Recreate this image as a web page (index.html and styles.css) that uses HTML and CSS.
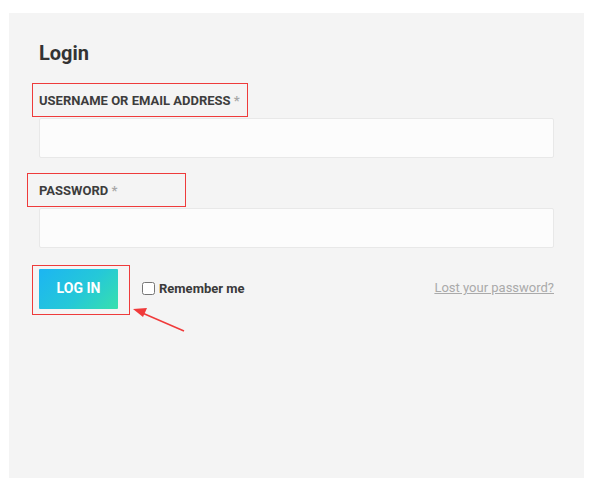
FILE: index.html
```html
<!DOCTYPE html>
<html>
<head>
<meta charset="utf-8">
<link rel="stylesheet" href="styles.css">
</head>
<body>
<div class="panel">
  <h2 class="title">Login</h2>
  <label class="field-label" for="user">Username or email address <span class="req">*</span></label>
  <input class="field-input" id="user" type="text">
  <label class="field-label pass-label" for="pass">Password <span class="req">*</span></label>
  <input class="field-input" id="pass" type="password">
  <div class="actions">
    <button class="login-btn" type="button">LOG IN</button>
    <label class="remember"><input type="checkbox" class="remember-box"><span>Remember me</span></label>
    <a class="lost" href="#">Lost your password?</a>
  </div>
</div>
<div class="mark mark-user"></div>
<div class="mark mark-pass"></div>
<div class="mark mark-btn"></div>
<svg class="arrow" width="70" height="40" viewBox="0 0 70 40">
  <line x1="64" y1="36" x2="20" y2="17" stroke="#f03a3a" stroke-width="1.5"/>
  <polygon points="13,14 27,13 23,22" fill="#f03a3a"/>
</svg>
</body>
</html>
```
FILE: styles.css
```css
html, body {
  margin: 0;
  padding: 0;
  background: #ffffff;
}
body {
  position: relative;
  width: 595px;
  height: 492px;
  font-family: Roboto, "Liberation Sans", sans-serif;
  color: #3a3a3a;
  overflow: hidden;
}
.panel {
  margin: 13px 11px 0 9px;
  height: 465px;
  box-sizing: border-box;
  background: #f4f4f4;
  padding: 28px 30px 0 30px;
}
.title {
  margin: 0;
  font-size: 20px;
  line-height: 24px;
  font-weight: 700;
  color: #333333;
}
.field-label {
  display: block;
  margin-top: 26px;
  font-size: 13px;
  line-height: 20px;
  font-weight: 700;
  text-transform: uppercase;
  color: #3d3d3d;
}
.pass-label {
  margin-top: 23px;
}
.req {
  color: #a8a8a8;
}
.field-input {
  display: block;
  box-sizing: border-box;
  width: 100%;
  height: 40px;
  margin: 7px 0 0 0;
  padding: 0 10px;
  border: 1px solid #e8e8e8;
  border-radius: 2px;
  background: #fcfcfc;
  outline: none;
}
.actions {
  display: flex;
  align-items: center;
  margin-top: 21px;
}
.login-btn {
  width: 79px;
  height: 40px;
  border: none;
  border-radius: 1px;
  background: linear-gradient(135deg, #1cb5f2 0%, #25c8d8 55%, #37e0ad 100%);
  color: #ffffff;
  font-family: Roboto, "Liberation Sans", sans-serif;
  font-size: 14px;
  font-weight: 700;
  padding: 0 0 2px 0;
}
.remember {
  display: flex;
  align-items: center;
  margin-left: 24px;
  font-size: 13px;
  font-weight: 700;
  color: #3a3a3a;
}
.remember-box {
  width: 13px;
  height: 13px;
  margin: 0 4px 0 0;
  position: relative;
  top: -1px;
}
.remember span {
  padding-bottom: 1px;
}
.lost {
  margin-left: auto;
  font-size: 13px;
  color: #aaaaaa;
  text-decoration: underline;
  padding-bottom: 3px;
}
.mark {
  position: absolute;
  border: 1px solid #ee3b3b;
  box-sizing: border-box;
}
.mark-user {
  left: 32px;
  top: 83px;
  width: 216px;
  height: 34px;
}
.mark-pass {
  left: 27px;
  top: 173px;
  width: 159px;
  height: 34px;
}
.mark-btn {
  left: 32px;
  top: 265px;
  width: 98px;
  height: 50px;
}
.arrow {
  position: absolute;
  left: 120px;
  top: 295px;
}
```
